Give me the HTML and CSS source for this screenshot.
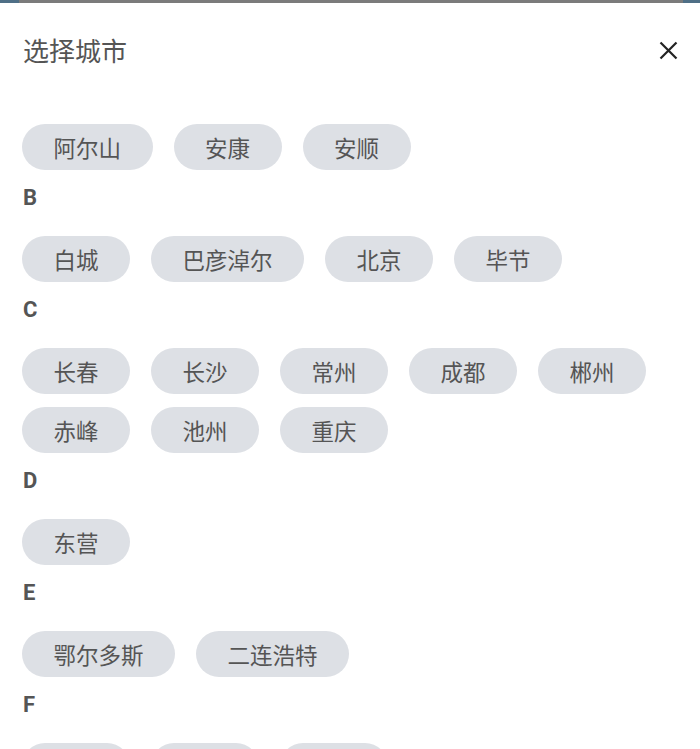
FILE: index.html
```html
<!DOCTYPE html>
<html lang="zh-CN">
<head>
<meta charset="utf-8">
<title>选择城市</title>
<link rel="stylesheet" href="styles.css">
</head>
<body>
<div class="topbar"></div>
<div class="page">
  <header class="header">
    <h1 class="title">选择城市</h1>
    <button class="close" aria-label="关闭">
      <svg width="19" height="19" viewBox="0 0 19 19"><path d="M1.5 1.5L17.5 17.5M17.5 1.5L1.5 17.5" stroke="#222" stroke-width="2.2" fill="none"/></svg>
    </button>
  </header>
  <div class="list">
    <section class="group">
      <div class="chips">
        <span class="chip">阿尔山</span><span class="chip">安康</span><span class="chip">安顺</span>
      </div>
    </section>
    <section class="group">
      <h2 class="letter">B</h2>
      <div class="chips">
        <span class="chip">白城</span><span class="chip">巴彦淖尔</span><span class="chip">北京</span><span class="chip">毕节</span>
      </div>
    </section>
    <section class="group">
      <h2 class="letter">C</h2>
      <div class="chips">
        <span class="chip">长春</span><span class="chip">长沙</span><span class="chip">常州</span><span class="chip">成都</span><span class="chip">郴州</span><span class="chip">赤峰</span><span class="chip">池州</span><span class="chip">重庆</span>
      </div>
    </section>
    <section class="group">
      <h2 class="letter">D</h2>
      <div class="chips">
        <span class="chip">东营</span>
      </div>
    </section>
    <section class="group">
      <h2 class="letter">E</h2>
      <div class="chips">
        <span class="chip">鄂尔多斯</span><span class="chip">二连浩特</span>
      </div>
    </section>
    <section class="group">
      <h2 class="letter">F</h2>
      <div class="chips">
        <span class="chip">佛山</span><span class="chip">福州</span><span class="chip">抚州</span>
      </div>
    </section>
  </div>
</div>
</body>
</html>
```
FILE: styles.css
```css
html, body {
  margin: 0;
  padding: 0;
  background: #ffffff;
  overflow: hidden;
}
body {
  font-family: "Noto Sans CJK SC", "Noto Sans", Roboto, sans-serif;
  color: #555555;
}
.topbar {
  height: 3px;
  background: linear-gradient(to right, #4f6f86 0, #4f6f86 19px, #7b7b7b 19px, #7b7b7b 683px, #4f6f86 683px);
}
.page {
  padding: 0 22px 0 22px;
}
.header {
  height: 94px;
  display: flex;
  align-items: center;
  justify-content: space-between;
  margin-bottom: 27px;
}
.title {
  margin: 0 0 0 1px;
  font-size: 26px;
  font-weight: 400;
  color: #555555;
  line-height: 32px;
}
.close {
  border: 0;
  background: none;
  padding: 0;
  margin-right: -2px;
  width: 24px;
  height: 24px;
  display: flex;
  align-items: center;
  justify-content: center;
}
.letter {
  margin: 14px 0 24px 1px;
  font-family: Roboto, "Noto Sans", sans-serif;
  font-size: 22px;
  font-weight: 700;
  line-height: 28px;
  color: #555555;
}
.chips {
  display: flex;
  flex-wrap: wrap;
  gap: 13px 21px;
}
.chip {
  display: inline-block;
  height: 46px;
  line-height: 46px;
  padding: 0 31.5px;
  border-radius: 23px;
  background: #dde0e5;
  font-size: 22.5px;
  color: #555555;
  white-space: nowrap;
}
```
